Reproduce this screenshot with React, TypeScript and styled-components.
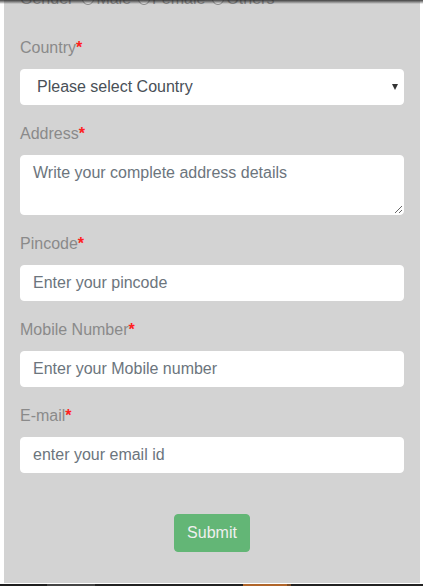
import React from "react";
import styled, { createGlobalStyle } from "styled-components";

const Global = createGlobalStyle`
  html, body { margin: 0; padding: 0; background: #ffffff; }
  body { font-family: "Liberation Sans", Arial, sans-serif; font-size: 16px; line-height: 24px; overflow: hidden; }
  * { box-sizing: border-box; }
`;

const Page = styled.div`
  margin-top: -13px;
  padding: 0 3px 0 4px;
`;

const Panel = styled.form`
  background: #d3d3d3;
  padding: 0 16px 31px 16px;
  display: flex;
  flex-direction: column;
`;

const GenderRow = styled.div`
  display: flex;
  align-items: center;
  height: 24px;
  margin-bottom: 24px;
  color: #8a8a8a;
  font-size: 16px;
`;

const GenderTitle = styled.span`
  margin-right: 6px;
`;

const RadioOption = styled.label`
  display: inline-flex;
  align-items: center;
  margin-right: 4px;
`;

const RadioCircle = styled.span`
  width: 12px;
  height: 12px;
  border-radius: 50%;
  border: 1px solid #8a8a8a;
  background: #ececec;
  margin: 0 2px 0 3px;
`;

const Group = styled.div`
  display: flex;
  flex-direction: column;
  margin-bottom: 16px;
`;

const Label = styled.label`
  color: #8a8a8a;
  font-size: 16px;
  line-height: 24px;
  padding-top: 1px;
  margin-bottom: 9px;
`;

const Req = styled.span`
  color: #ff2020;
  font-weight: bold;
`;

const fieldBase = `
  width: 100%;
  height: 36px;
  border: 1px solid #ffffff;
  border-radius: 4px;
  background: #ffffff;
  font-family: "Liberation Sans", Arial, sans-serif;
  font-size: 16px;
  line-height: 24px;
  color: #495057;
  padding: 6px 12px;
  outline: none;
  &::placeholder { color: #6c757d; opacity: 1; }
`;

const Input = styled.input`
  ${fieldBase}
`;

const TextArea = styled.textarea`
  ${fieldBase}
  height: 60px;
  resize: vertical;
  padding: 5px 12px;
`;

const SelectWrap = styled.div`
  position: relative;
`;

const Select = styled.select`
  ${fieldBase}
  appearance: none;
  -webkit-appearance: none;
  padding: 5px 12px 5px 16px;
  color: #495057;
`;

const Caret = styled.span`
  position: absolute;
  right: 6px;
  top: 50%;
  transform: translateY(-50%);
  width: 0;
  height: 0;
  border-left: 3.5px solid transparent;
  border-right: 3.5px solid transparent;
  border-top: 6px solid #333;
  pointer-events: none;
`;

const LastGroup = styled(Group)`
  margin-bottom: 41px;
`;

const SubmitButton = styled.button`
  align-self: center;
  height: 38px;
  padding: 6px 12px;
  border: 1px solid #28a745;
  border-radius: 4px;
  background: #28a745;
  color: #ffffff;
  font-family: "Liberation Sans", Arial, sans-serif;
  font-size: 16px;
  line-height: 24px;
  opacity: 0.65;
`;

const TopShadow = styled.div`
  position: fixed;
  top: 0;
  left: 0;
  right: 0;
  height: 4px;
  background: linear-gradient(to bottom, rgba(40,40,40,0.85), rgba(40,40,40,0.45) 50%, rgba(40,40,40,0));
  pointer-events: none;
`;

const Taskbar = styled.div`
  margin-top: 1px;
  height: 4px;
  display: flex;
  background: #222222;
`;

const TaskSeg = styled.div<{ $w: number; $c: string }>`
  width: ${(p) => p.$w}px;
  background: ${(p) => p.$c};
  flex: none;
`;

const fields = [
  { label: "Pincode", placeholder: "Enter your pincode" },
  { label: "Mobile Number", placeholder: "Enter your Mobile number" },
];

export default function App() {
  return (
    <>
      <Global />
      <Page>
        <Panel onSubmit={(e) => e.preventDefault()}>
          <GenderRow>
            <GenderTitle>Gender</GenderTitle>
            <RadioOption><RadioCircle />Male</RadioOption>
            <RadioOption><RadioCircle />Female</RadioOption>
            <RadioOption><RadioCircle />Others</RadioOption>
          </GenderRow>
          <Group>
            <Label>Country<Req>*</Req></Label>
            <SelectWrap>
              <Select defaultValue="">
                <option value="">Please select Country</option>
              </Select>
              <Caret />
            </SelectWrap>
          </Group>
          <Group>
            <Label>Address<Req>*</Req></Label>
            <TextArea placeholder="Write your complete address details" />
          </Group>
          {fields.map((f) => (
            <Group key={f.label}>
              <Label>{f.label}<Req>*</Req></Label>
              <Input placeholder={f.placeholder} />
            </Group>
          ))}
          <LastGroup>
            <Label>E-mail<Req>*</Req></Label>
            <Input placeholder="enter your email id" />
          </LastGroup>
          <SubmitButton type="submit" disabled>Submit</SubmitButton>
        </Panel>
      </Page>
      <Taskbar>
        <TaskSeg $w={47} $c="#1f1f1f" />
        <TaskSeg $w={48} $c="#444444" />
        <TaskSeg $w={148} $c="#222222" />
        <TaskSeg $w={44} $c="#b0652a" />
        <TaskSeg $w={4} $c="#7a4a22" />
      </Taskbar>
      <TopShadow />
    </>
  );
}
